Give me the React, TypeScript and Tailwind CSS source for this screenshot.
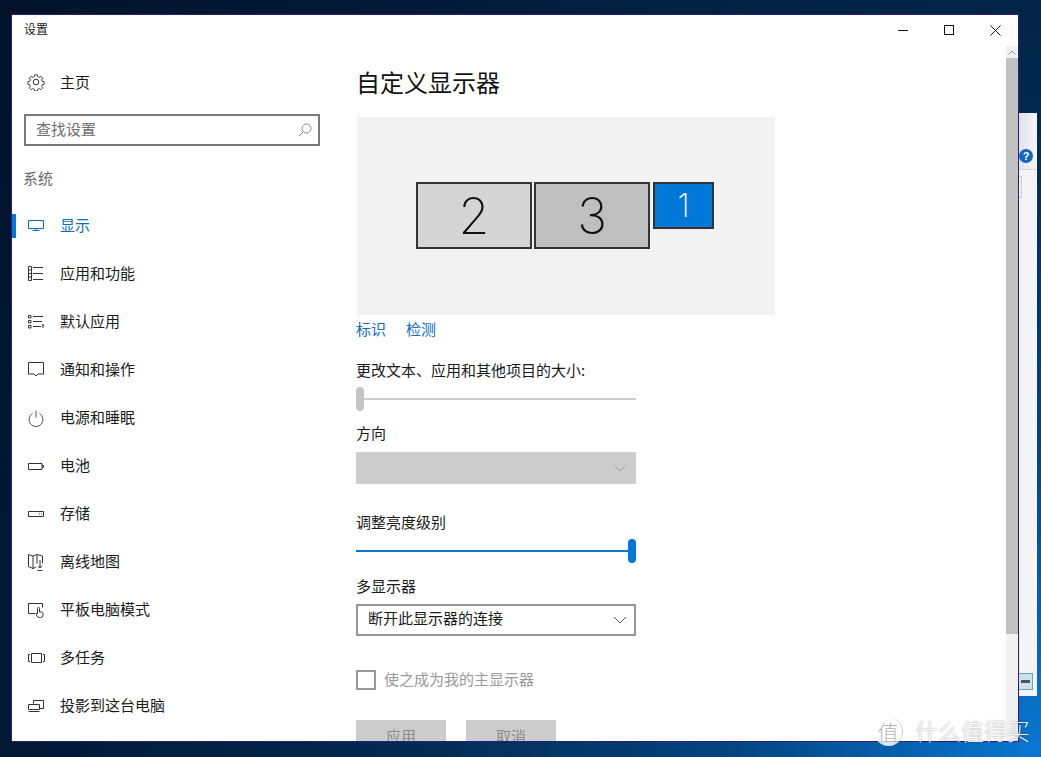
import React from "react";

const S = "#333333";

function Ic({ children }: { children: React.ReactNode }) {
  return (
    <svg width="18" height="18" viewBox="0 0 18 18" fill="none" stroke={S} strokeWidth="1" className="shrink-0">
      {children}
    </svg>
  );
}

const icons: Record<string, React.ReactNode> = {
  apps: (
    <>
      <path d="M1.500 1.500h3v14h-3zM1.500 5h3M1.500 8.500h3M1.500 12h3" />
      <path d="M6 2.500h10M6 8.500h10M6 14.500h10" />
    </>
  ),
  defaults: (
    <>
      <path d="M1.500 2.500h2.500v2.500h-2.500zM1.500 7.500h2.500v2.500h-2.500zM1.500 12.500h2.500v2.500h-2.500z" />
      <path d="M6 3.500h10M6 8.500h9M6 13.500h8M16 15v-3.500M14.800 12.700l1.200-1.200 1.200 1.200" />
    </>
  ),
  notify: <path d="M1.500 1.500h15v11.500h-5.500l-2 2-2-2h-5.500z" />,
  power: (
    <>
      <path d="M9 1.500v7" stroke="#555555" />
      <path d="M5.500 4.500a7 7 0 1 0 7 0" stroke="#555555" />
    </>
  ),
  battery: <path d="M1.500 6.500h13.500v6h-13.500zM15 8.500h1.500v2h-1.500" />,
  storage: <path d="M1.500 6.500h15v5h-15zM12 9h1M14 9h1" />,
  map: (
    <>
      <path d="M6 3l-4.500-1.500v12l4.500 2 3-1.500M6 3v13M6 3l4-1.500 5.500 1.500v7M10 1.500v9" />
      <path d="M13 7v8M11 13l2 2 2-2M10.500 17.500h5" />
    </>
  ),
  tablet: (
    <>
      <path d="M8 12.500h-6.500v-10h14v4" />
      <path d="M10.500 13v-5.500a1 1 0 0 1 2 0v3.500h2a1.500 1.500 0 0 1 1.500 1.500v1.500a2.500 2.500 0 0 1-2.500 2.500h-1a2.500 2.500 0 0 1-2.500-1.500l-1-2a1 1 0 0 1 1.500-1" />
    </>
  ),
  multi: <path d="M4.500 4.500h10v9h-10zM3 5.500h-1.500v7h1.500M16 5.500h1.500v7h-1.500" />,
  project: <path d="M6.500 6.500v-3h10v8h-4M1.500 7.500h11v5h-11zM1.500 14.500h11" />,
};

const items: [string, string][] = [
  ["应用和功能", "apps"],
  ["默认应用", "defaults"],
  ["通知和操作", "notify"],
  ["电源和睡眠", "power"],
  ["电池", "battery"],
  ["存储", "storage"],
  ["离线地图", "map"],
  ["平板电脑模式", "tablet"],
  ["多任务", "multi"],
  ["投影到这台电脑", "project"],
];

function Chevron({ color }: { color: string }) {
  return (
    <svg width="14" height="8" viewBox="0 0 14 8" fill="none" stroke={color} strokeWidth="1">
      <path d="M1 1l6 6 6-6" />
    </svg>
  );
}

function Monitor({ n, cls, num, h }: { n: string; cls: string; num: string; h: string }) {
  return (
    <div className={`flex items-center justify-center border-2 border-[#333333] ${cls} ${h}`}>
      <span className={num} style={{ fontFamily: "Inter, sans-serif" }}>{n}</span>
    </div>
  );
}

export default function App() {
  return (
    <div
      className="relative h-[757px] w-[1041px] overflow-hidden bg-[radial-gradient(circle_at_100%_100%,#0a78d2_0%,#0765b4_9%,#044480_24%,#03294f_50%,#021a38_75%,#02132b_100%)] text-[15px] text-[#1a1a1a]"
      style={{ fontFamily: '"Noto Sans CJK SC", "Noto Sans", sans-serif' }}
    >
      {/* window behind */}
      <div className="absolute left-[1018px] top-[113px] flex h-[583px] w-[19px] flex-col bg-[#f4f3f5]">
        <div className="h-[57px] border-b border-[#d4d4d4] bg-[linear-gradient(90deg,#e4e0ee,#f6f6f6)]" />
        <div className="mt-[6px] h-[22px] w-[4px] border border-[#cccccc]" />
        <div className="flex-1" />
        <div className="mb-[6px] flex h-[17px] w-[15px] items-center justify-center border border-[#5fa3c7] bg-[#cfe1ea]">
          <div className="h-[3px] w-[9px] bg-[#4a5560]" />
        </div>
      </div>
      <div className="absolute left-[1019px] top-[149px] flex h-[14px] w-[14px] items-center justify-center rounded-full bg-[#1268bd] text-[11px] font-bold leading-none text-white" style={{ fontFamily: '"Liberation Sans", sans-serif' }}>?</div>

      {/* settings window */}
      <div className="absolute left-[11px] top-[14px] flex h-[728px] w-[1008px] flex-col overflow-hidden border border-[#2a1f80] bg-white">
        <div className="mb-[1px] flex h-[30px] shrink-0 items-center justify-between">
          <span className="ml-[12px] pb-[2px] text-[12px]">设置</span>
          <div className="flex h-full items-center">
            <div className="flex h-full w-[46px] items-center justify-center">
              <div className="h-px w-[10px] bg-[#111111]" />
            </div>
            <div className="flex h-full w-[46px] items-center justify-center">
              <div className="h-[10px] w-[10px] border border-[#111111]" />
            </div>
            <div className="flex h-full w-[46px] items-center justify-center">
              <svg width="11" height="11" viewBox="0 0 11 11" stroke="#111111" strokeWidth="1"><path d="M.5.5l10 10M10.500.5l-10 10" /></svg>
            </div>
          </div>
        </div>

        <div className="flex min-h-0 flex-1">
          {/* sidebar */}
          <div className="flex w-[344px] shrink-0 flex-col">
            <div className="flex h-[48px] shrink-0 items-center gap-[15px] pl-[15px] pt-[22px]">
              <svg width="18" height="18" viewBox="0 0 18 18" fill="none" stroke={S} strokeWidth="1" className="mt-[2px] shrink-0">
                <circle cx="9" cy="9" r="2.800" />
                <path d="M7.500 1h3l.4 2.200 1.600.7 1.900-1.300 2.100 2.100-1.300 1.900.7 1.600 2.100.4v3l-2.100.4-.7 1.600 1.300 1.900-2.100 2.100-1.900-1.300-1.600.7-.4 2h-3l-.4-2-1.600-.7-1.900 1.300-2.100-2.100 1.300-1.900-.7-1.600-2.100-.4v-3l2.100-.4.7-1.600-1.300-1.900 2.100-2.100 1.900 1.300 1.600-.7z" transform="translate(.9 .9) scale(.9)" />
              </svg>
              <span className="leading-none">主页</span>
            </div>
            <div className="ml-[12px] mt-[20px] flex h-[32px] w-[296px] shrink-0 items-center justify-between border-2 border-[#7a7a7a] pl-[10px] pr-[6px] text-[#6d6d6d]">
              <span className="pb-[2px]">查找设置</span>
              <svg width="14" height="14" viewBox="0 0 14 14" fill="none" stroke="#888888" strokeWidth="1"><circle cx="8.500" cy="5.500" r="4.500" /><path d="M5.300 8.700L.7 13.300" /></svg>
            </div>
            <div className="ml-[11px] mt-[21px] flex h-[22px] shrink-0 items-center text-[15px] text-[#6b6b6b]">系统</div>
            <div className="mt-[13px] flex h-[48px] shrink-0 items-center">
              <div className="h-[24px] w-[4px] bg-[#0078d7]" />
              <div className="ml-[11px] flex items-center gap-[15px] text-[#0f6cbd]">
                <svg width="18" height="18" viewBox="0 0 18 18" fill="none" stroke="#0f6cbd" strokeWidth="1" className="shrink-0"><path d="M1.500 3.500h15v8h-15zM9 11.500v2.500M5.500 13.500h7" /></svg>
                <span className="pb-[2px]">显示</span>
              </div>
            </div>
            {items.map(([label, ic]) => (
              <div key={label} className="flex h-[48px] shrink-0 items-center gap-[15px] pl-[15px]">
                <Ic>{icons[ic]}</Ic>
                <span className="pb-[2px]">{label}</span>
              </div>
            ))}
          </div>

          {/* content */}
          <div className="flex min-w-0 flex-1 flex-col overflow-hidden">
            <div className="mt-[16px] flex h-[40px] shrink-0 items-center text-[24px] leading-none text-[#111111]">
              <span>自定义显示器</span>
            </div>
            <div className="ml-[1px] mt-[15px] flex h-[198px] w-[418px] shrink-0 items-start gap-[2px] bg-[#f2f2f2] pl-[59px] pt-[65px]">
              <Monitor n="2" cls="w-[116px] bg-[#d5d5d5]" h="h-[67px]" num="text-[50px] font-extralight leading-none text-[#111111]" />
              <Monitor n="3" cls="w-[116px] bg-[#bfbfbf]" h="h-[67px]" num="text-[50px] font-extralight leading-none text-[#111111]" />
              <Monitor n="1" cls="ml-[1px] w-[61px] bg-[#0078d7]" h="h-[47px]" num="text-[32px] font-extralight leading-none text-white" />
            </div>
            <div className="mt-[2px] flex h-[24px] shrink-0 items-center gap-[20px] text-[#0f6cbd]">
              <span>标识</span>
              <span>检测</span>
            </div>

            <div className="mt-[17px] h-[24px] shrink-0 leading-[24px]">更改文本、应用和其他项目的大小:</div>
            <div className="relative mt-[5px] flex h-[24px] w-[280px] shrink-0 items-center">
              <div className="h-[2px] w-full bg-[#cccccc]" />
              <div className="absolute left-0 top-0 h-[24px] w-[8px] rounded-[4px] bg-[#c4c4c4]" />
            </div>
            <div className="mt-[10px] h-[24px] shrink-0 leading-[24px]">方向</div>
            <div className="mt-[7px] flex h-[32px] w-[280px] shrink-0 items-center justify-end bg-[#cccccc] pr-[9px]">
              <Chevron color="#a8a8a8" />
            </div>
            <div className="mt-[26px] h-[24px] shrink-0 leading-[24px]">调整亮度级别</div>
            <div className="relative mt-[5px] flex h-[24px] w-[280px] shrink-0 items-center">
              <div className="h-[2px] w-full bg-[#0078d7]" />
              <div className="absolute right-0 top-0 h-[24px] w-[8px] rounded-[4px] bg-[#0078d7]" />
            </div>
            <div className="mt-[11px] h-[24px] shrink-0 leading-[24px]">多显示器</div>
            <div className="mt-[6px] flex h-[32px] w-[280px] shrink-0 items-center justify-between border-2 border-[#999999] pl-[10px] pr-[7px]">
              <span className="pb-[3px]">断开此显示器的连接</span>
              <Chevron color="#555555" />
            </div>
            <div className="mt-[34px] flex h-[20px] shrink-0 items-center gap-[8px] text-[#9a9a9a]">
              <div className="h-[20px] w-[20px] border-2 border-[#999999]" />
              <span className="pb-[2px]">使之成为我的主显示器</span>
            </div>
            <div className="mt-[30px] flex shrink-0 gap-[20px] text-[#8c8c8c]">
              <div className="flex h-[32px] w-[90px] items-center justify-center bg-[#cccccc]">应用</div>
              <div className="flex h-[32px] w-[90px] items-center justify-center bg-[#cccccc]">取消</div>
            </div>
          </div>

          {/* scrollbar */}
          <div className="flex w-[12px] shrink-0 flex-col bg-[#f1f1f1]">
            <div className="flex h-[12px] shrink-0 items-center justify-center">
              <svg width="8" height="5" viewBox="0 0 8 5" fill="none" stroke="#9a9a9a"><path d="M.5 4.500L4 1l3.500 3.500" /></svg>
            </div>
            <div className="h-[576px] shrink-0 bg-[#c2c2c2]" />
          </div>
        </div>
      </div>

      {/* watermark */}
      <div className="absolute left-[874px] top-[717px] flex h-[29px] w-[29px] items-center justify-center rounded-full border-r border-[#cfcfcf] bg-white/85 text-[21px] font-light leading-none text-[#b5b5b5]">值</div>
      <div className="absolute left-[915px] top-[715px] text-[23px] font-light leading-[30px] text-white/90 [text-shadow:0_0_2px_rgba(0,0,0,0.45)]">什么值得买</div>
    </div>
  );
}
